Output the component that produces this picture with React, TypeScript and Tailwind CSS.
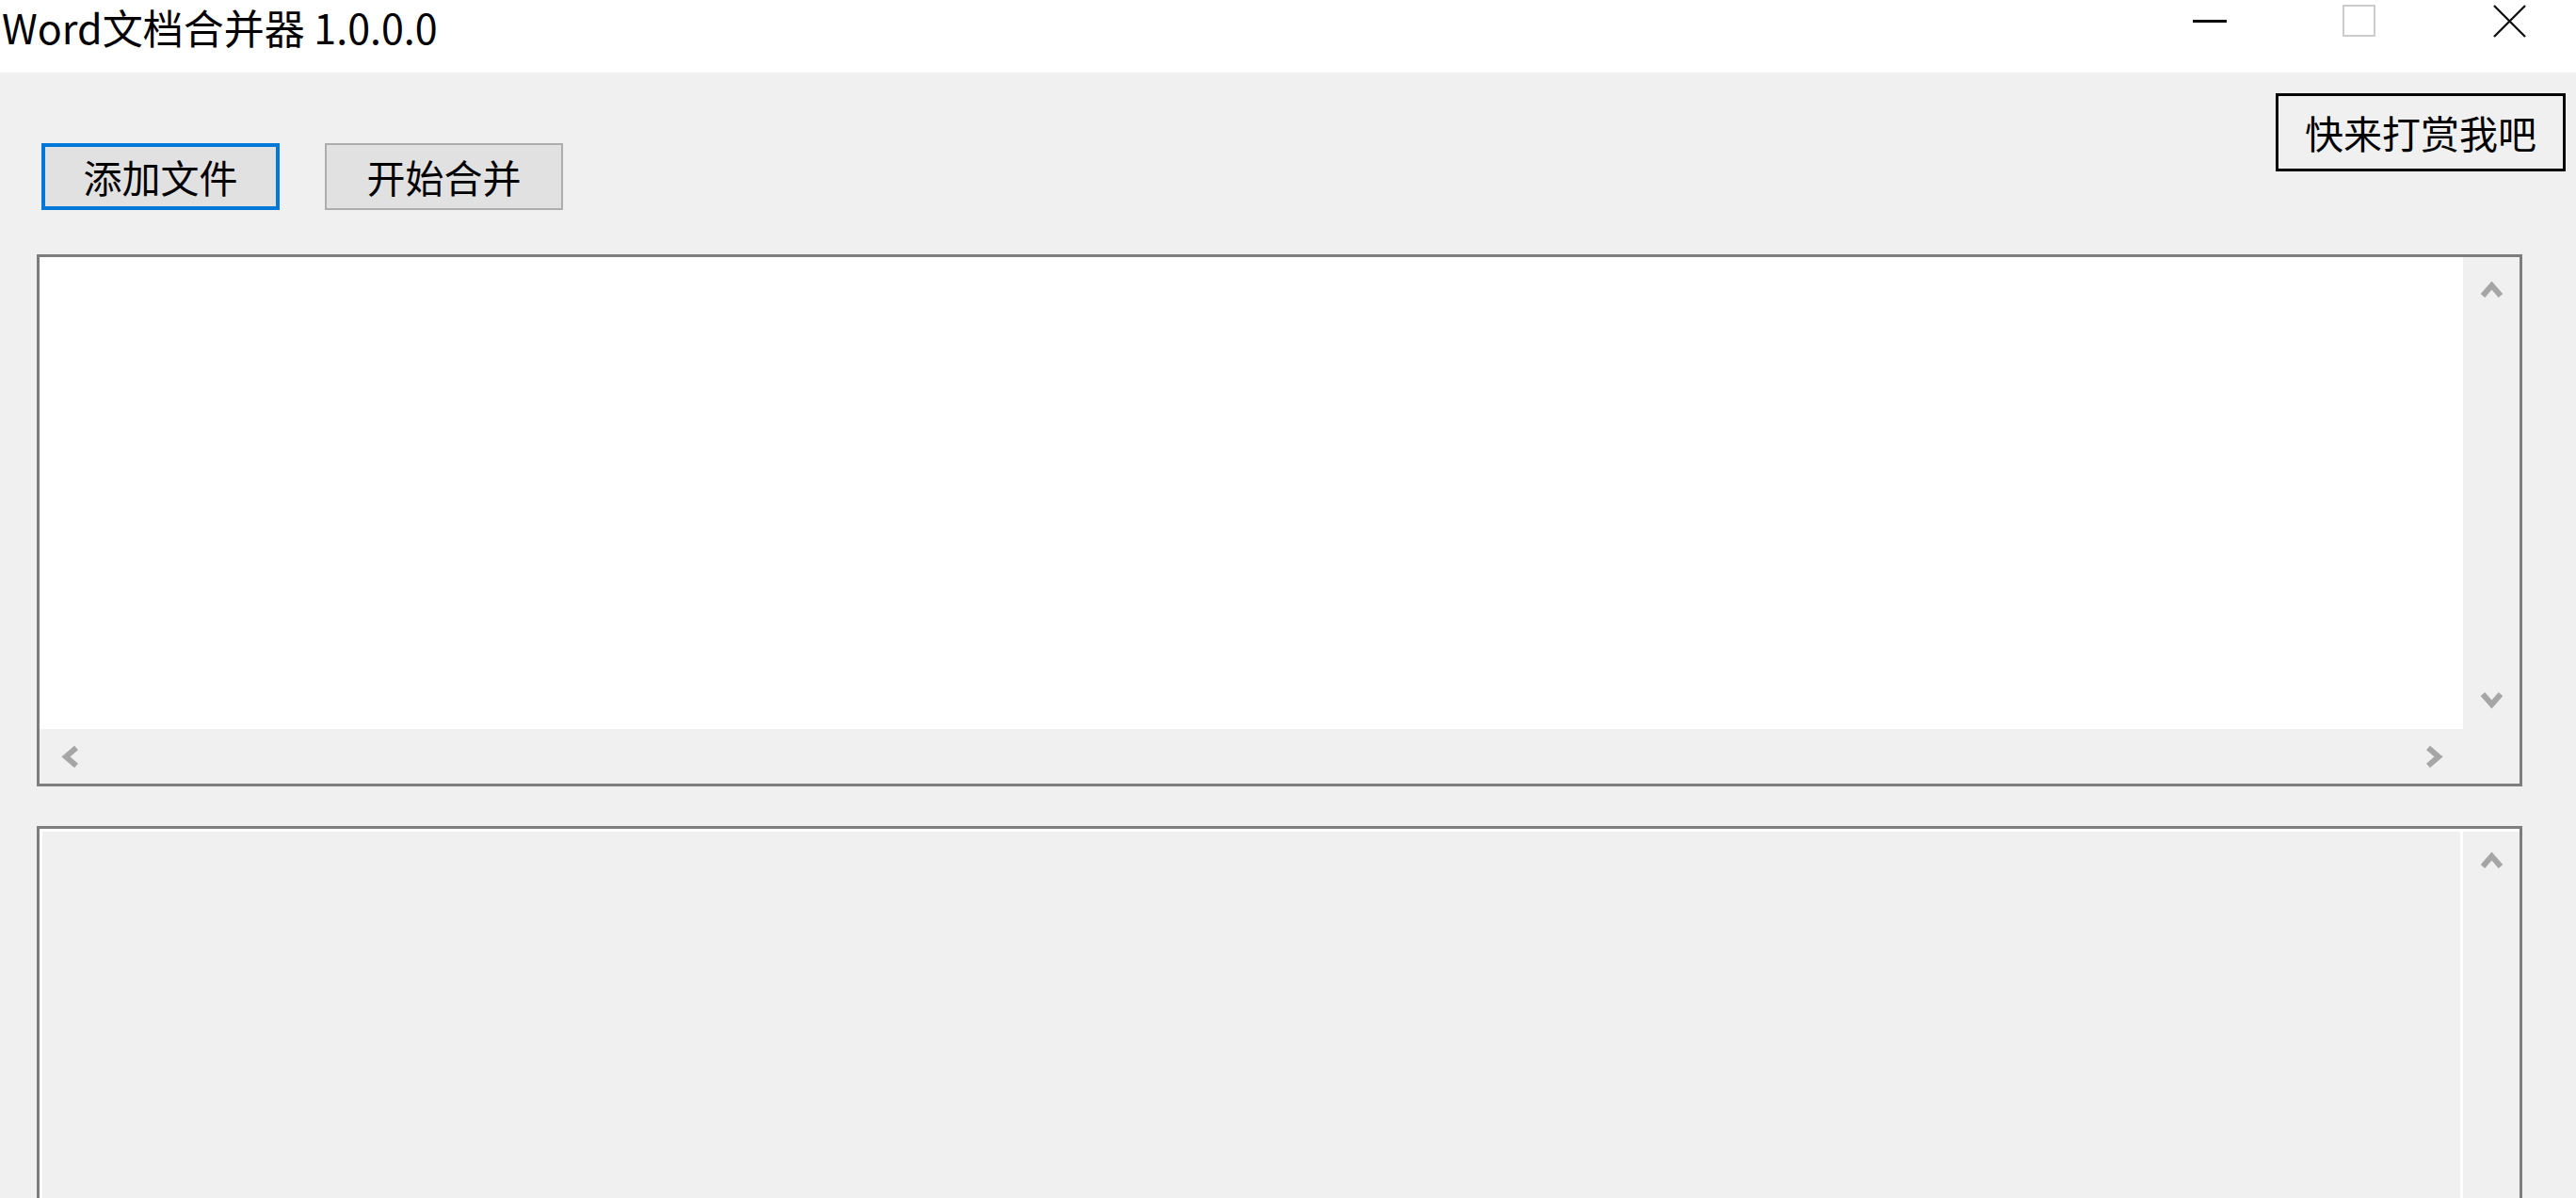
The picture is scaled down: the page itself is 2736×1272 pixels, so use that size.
import { FC } from "react"

const font = "font-['Noto_Sans_CJK_SC',sans-serif]"

type Dir = "up" | "down" | "left" | "right"

const Arrow: FC<{ dir: Dir }> = ({ dir }) => {
  const pts: Record<Dir, string> = {
    up: "3,17 12.5,6 22,17",
    down: "3,4 12.5,15 22,4",
    left: "17,3 6,12.5 17,22",
    right: "4,3 15,12.5 4,22",
  }
  const horiz = dir === "up" || dir === "down"
  return (
    <svg
      width={horiz ? 25 : 21}
      height={horiz ? 21 : 25}
      viewBox={horiz ? "0 0 25 21" : "0 0 21 25"}
    >
      <polyline
        points={pts[dir]}
        fill="none"
        stroke="#a6a6a6"
        strokeWidth="6"
        strokeLinejoin="miter"
      />
    </svg>
  )
}

const TitleBar: FC = () => (
  <div className="flex h-[77px] items-start bg-white">
    <div className={`${font} flex-1 pl-[2px] pt-[2px] text-[43px] leading-[52px] whitespace-nowrap text-black`}>
      Word文档合并器 1.0.0.0
    </div>
    <div className="flex h-[44px] items-center pr-[53px]">
      <div className="h-[3px] w-[36px] bg-black" />
      <div className="ml-[123px] h-[34px] w-[35px] border-2 border-[#cccccc]" />
      <svg className="ml-[125px]" width="35" height="35" viewBox="0 0 36 36">
        <path d="M1 1 L35 35 M35 1 L1 35" stroke="#111" strokeWidth="2.4" />
      </svg>
    </div>
  </div>
)

export default function App() {
  return (
    <div className={`${font} h-[1272px] w-[2736px] overflow-hidden bg-[#f0f0f0]`}>
      <TitleBar />
      <div className="pt-[22px]">
        <div className="flex items-start justify-between">
          <div className="flex gap-[48px] pl-[44px] pt-[53px]">
            <button className="flex h-[71px] w-[253px] items-center justify-center border-[4px] border-[#0078d7] bg-[#e1e1e1] text-[41px] leading-none text-black">
              添加文件
            </button>
            <button className="flex h-[71px] w-[253px] items-center justify-center border-2 border-[#adadad] bg-[#e1e1e1] text-[41px] leading-none text-black">
              开始合并
            </button>
          </div>
          <button className="mr-[11px] flex h-[83px] w-[308px] items-center justify-center border-[3px] border-black bg-[#f0f0f0] text-[41px] leading-none text-black">
            快来打赏我吧
          </button>
        </div>

        {/* file list */}
        <div className="ml-[39px] mt-[47px] grid h-[565px] w-[2640px] grid-cols-[1fr_60px] grid-rows-[1fr_58px] border-[3px] border-[#7d7d7d] bg-[#f0f0f0]">
          <div className="bg-white" />
          <div className="flex flex-col items-center justify-between pb-[20px] pt-[24px]">
            <Arrow dir="up" />
            <Arrow dir="down" />
          </div>
          <div className="flex items-center justify-between pl-[22px] pr-[20px]">
            <Arrow dir="left" />
            <Arrow dir="right" />
          </div>
          <div />
        </div>

        {/* log box */}
        <div className="ml-[39px] mt-[42px] flex h-[520px] w-[2640px] border-[3px] border-[#7d7d7d] bg-[#f0f0f0]">
          <div className="flex flex-1 border-l-[3px] border-t-[3px] border-white" />
          <div className="flex w-[63px] justify-center border-l-[3px] border-t-[3px] border-white pt-[20px]">
            <div className="h-fit">
              <Arrow dir="up" />
            </div>
          </div>
        </div>
      </div>
    </div>
  )
}
